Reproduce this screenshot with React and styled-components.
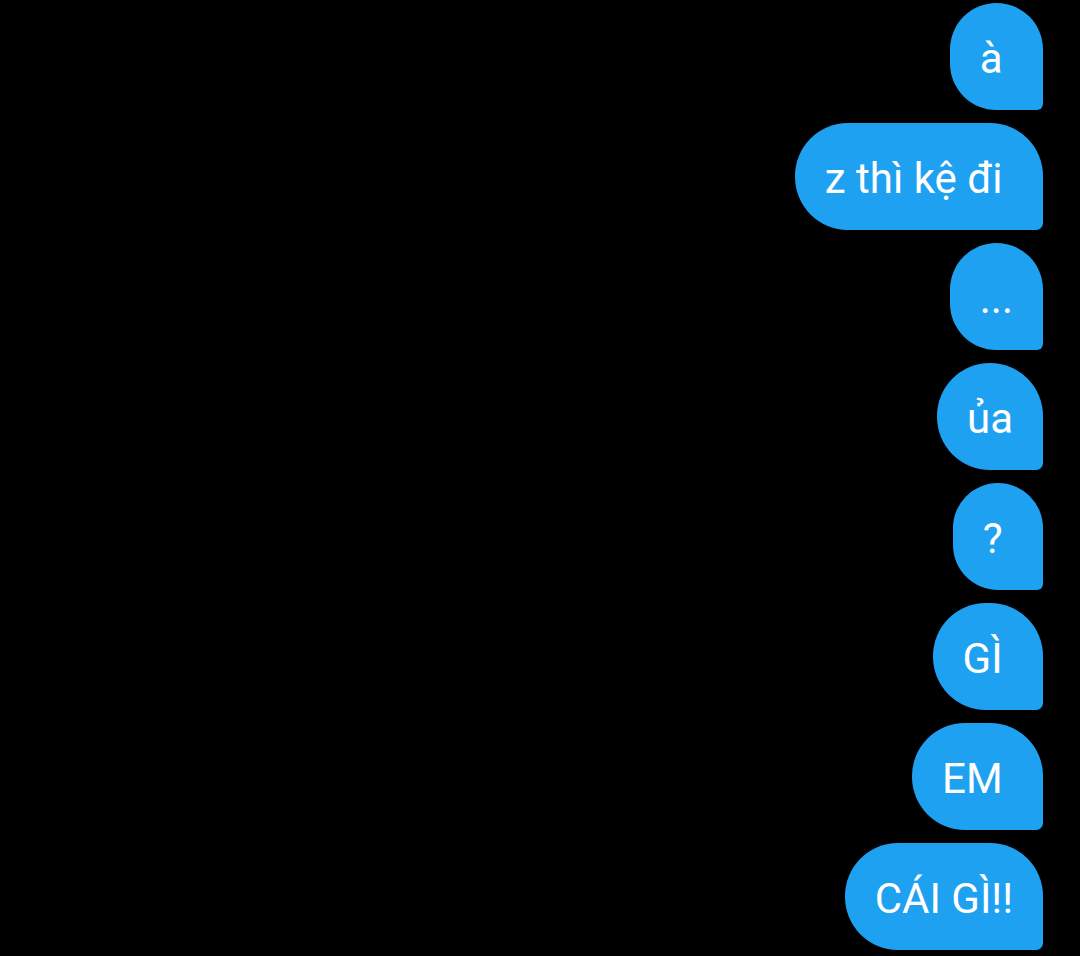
import styled, { createGlobalStyle } from "styled-components";

const GlobalStyle = createGlobalStyle`
  html, body {
    margin: 0;
    padding: 0;
    background: #000;
  }
`;

const Thread = styled.div`
  box-sizing: border-box;
  width: 100%;
  height: 956px;
  overflow: hidden;
  background-color: #000;
  display: flex;
  flex-direction: column;
  align-items: flex-end;
  gap: 13px;
  padding: 3px 37px 0 0;
  font-family: Roboto, "Noto Sans", sans-serif;
`;

const Bubble = styled.div`
  box-sizing: border-box;
  height: 107px;
  display: flex;
  align-items: center;
  justify-content: center;
  padding: 4px 30px 0;
  background-color: #1fa1f1;
  color: #fff;
  font-size: 42px;
  line-height: 1;
  white-space: pre;
  border-radius: 53px 53px 7px 53px;
`;

// trailing spaces are part of the messages as typed
const messages = ["à ", "z thì kệ đi ", "...", "ủa", "? ", "GÌ ", "EM ", "CÁI GÌ!!"];

const App = () => {
  return (
    <>
      <GlobalStyle />
      <Thread>
        {messages.map((m, i) => (
          <Bubble key={i}>{m}</Bubble>
        ))}
      </Thread>
    </>
  );
};

export default App;
